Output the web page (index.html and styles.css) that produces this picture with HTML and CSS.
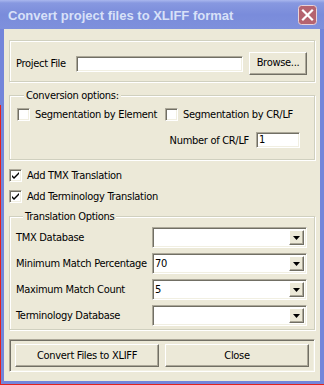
FILE: index.html
```html
<!DOCTYPE html>
<html lang="en">
<head>
    <meta charset="UTF-8">
    <title>Convert project files to XLIFF format</title>
    <link rel="stylesheet" href="styles.css">
</head>
<body>
    <div class="window">
        <div class="titlebar">
            <span class="title">Convert project files to XLIFF format</span>
            <span class="close-btn">
                <svg width="19" height="20" viewBox="0 0 19 20">
                    <rect x="0.5" y="0.5" width="18" height="19" rx="3" fill="#b5636f" stroke="#e9d2d8"/>
                    <path d="M5 5.5 L14 14.5 M14 5.5 L5 14.5" stroke="#fff" stroke-width="2.2" stroke-linecap="square"/>
                </svg>
            </span>
        </div>

        <div class="client">
            <div class="group project">
                <span class="lbl file-lbl">Project File</span>
                <span class="field file"></span>
                <button class="btn browse">Browse...</button>
            </div>

            <fieldset class="group conv">
                <legend>Conversion options:</legend>
                <div class="checks">
                    <label class="check first"><span class="box"></span>Segmentation by Element</label>
                    <label class="check"><span class="box"></span>Segmentation by CR/LF</label>
                </div>
                <div class="crlf">
                    <span>Number of CR/LF</span>
                    <span class="field num">1</span>
                </div>
            </fieldset>

            <label class="check top tmx"><span class="box checked"></span>Add TMX Translation</label>
            <label class="check top term"><span class="box checked"></span>Add Terminology Translation</label>

            <fieldset class="group trans">
                <legend>Translation Options</legend>
                <div class="opt">
                    <span>TMX Database</span>
                    <span class="combo"><span class="val"></span><span class="arrow"></span></span>
                </div>
                <div class="opt">
                    <span>Minimum Match Percentage</span>
                    <span class="combo"><span class="val">70</span><span class="arrow"></span></span>
                </div>
                <div class="opt">
                    <span>Maximum Match Count</span>
                    <span class="combo"><span class="val">5</span><span class="arrow"></span></span>
                </div>
                <div class="opt">
                    <span>Terminology Database</span>
                    <span class="combo"><span class="val"></span><span class="arrow"></span></span>
                </div>
            </fieldset>

            <div class="actions">
                <button class="btn wide">Convert Files to XLIFF</button>
                <button class="btn wide">Close</button>
            </div>
        </div>
    </div>
</body>
</html>
```

FILE: styles.css
```css
body {
    margin: 0;
    padding: 0;
    font-family: 'DejaVu Sans', sans-serif;
    font-stretch: condensed;
    font-size: 11px;
    letter-spacing: -0.3px;
    color: #000;
    background: #fff;
}

.window {
    width: 324px;
    height: 385px;
    box-sizing: border-box;
    display: flex;
    flex-direction: column;
    background:
        linear-gradient(#e3211c, #e3211c) left bottom / 100% 1px no-repeat,
        linear-gradient(to bottom, transparent 105px, #e3211c 105px) left top / 1px 100% no-repeat,
        #7385da;
}

.titlebar {
    height: 29px;
    flex: none;
    display: flex;
    align-items: center;
    justify-content: space-between;
    padding: 0 7px 0 8px;
    background: linear-gradient(#a9b7ee 0, #8798e0 3px, #7a8cdb 50%, #7e90dc 100%);
}

.title {
    font-family: 'Liberation Sans', sans-serif;
    font-stretch: normal;
    font-weight: bold;
    font-size: 13px;
    letter-spacing: 0;
    color: #d8e1f8;
    padding-top: 1px;
}

.close-btn {
    display: flex;
    margin-top: 1px;
}

.client {
    flex: 1;
    margin: 0 4px 4px 4px;
    background: #ece9d8;
    padding-top: 11px;
    display: flex;
    flex-direction: column;
}

.group {
    margin: 0 5px;
    border: 1px solid #d0d0bf;
    box-shadow: inset 1px 1px 0 #fff, 1px 1px 0 #fff;
    border-radius: 0;
    min-inline-size: 0;
}

legend {
    padding: 0 2px;
    margin-left: 7px;
    line-height: 13px;
    background: #ece9d8;
}

.project {
    height: 42px;
    box-sizing: border-box;
    display: flex;
    align-items: center;
    padding: 5px 0 0 6px;
}

.file-lbl {
    width: 60px;
}

.field {
    box-sizing: border-box;
    background: #fff;
    border-top: 1px solid #aca899;
    border-left: 1px solid #aca899;
    border-bottom: 1px solid #fff;
    border-right: 1px solid #fff;
    box-shadow: inset 1px 1px 0 #716f64, inset -1px -1px 0 #f1efe2;
}

.file {
    width: 167px;
    height: 16px;
}

.btn {
    font: inherit;
    letter-spacing: inherit;
    color: #000;
    background: #ece9d8;
    box-sizing: border-box;
    padding: 0;
    border-top: 1px solid #fff;
    border-left: 1px solid #fff;
    border-bottom: 1px solid #716f64;
    border-right: 1px solid #716f64;
    box-shadow: inset -1px -1px 0 #aca899;
}

.browse {
    width: 58px;
    height: 23px;
    margin-left: 6px;
    padding-bottom: 2px;
}

.conv {
    margin-top: 7px;
    padding: 0 7px 11px 7px;
}

.checks {
    display: flex;
    margin-top: 6px;
}

.check {
    display: flex;
    align-items: center;
    gap: 5px;
    height: 13px;
    white-space: nowrap;
}

.check.first {
    width: 148px;
}

.box {
    width: 13px;
    height: 13px;
    box-sizing: border-box;
    flex: none;
    background: #fff;
    border-top: 1px solid #aca899;
    border-left: 1px solid #aca899;
    border-bottom: 1px solid #fff;
    border-right: 1px solid #fff;
    box-shadow: inset 1px 1px 0 #716f64, inset -1px -1px 0 #f1efe2;
}

.box.checked {
    background:
        url("data:image/svg+xml;utf8,<svg xmlns='http://www.w3.org/2000/svg' width='11' height='11'><path d='M2 5 L4 7 L9 2 L9 4 L4 9 L2 7 Z' fill='%23000'/></svg>") center / 11px 11px no-repeat,
        #fff;
}

.crlf {
    display: flex;
    justify-content: flex-end;
    align-items: center;
    gap: 7px;
    margin: 11px 7px 0 0;
}

.num {
    width: 44px;
    height: 16px;
    padding-left: 2px;
    line-height: 13px;
}

.top {
    margin-left: 5px;
}

.tmx {
    margin-top: 9px;
}

.term {
    margin-top: 8px;
}

.trans {
    margin-top: 7px;
    padding: 0 7px 3px 6px;
}

.opt {
    display: flex;
    align-items: center;
    justify-content: space-between;
    margin-top: 5px;
}

.opt:first-of-type {
    margin-top: 4px;
}

.combo {
    width: 155px;
    height: 21px;
    box-sizing: border-box;
    display: flex;
    align-items: center;
    background: #fff;
    border-top: 1px solid #aca899;
    border-left: 1px solid #aca899;
    border-bottom: 1px solid #fff;
    border-right: 1px solid #fff;
    box-shadow: inset 1px 1px 0 #716f64, inset -1px -1px 0 #f1efe2;
    padding: 2px;
}

.val {
    flex: 1;
}

.arrow {
    width: 15px;
    height: 15px;
    box-sizing: border-box;
    flex: none;
    background:
        url("data:image/svg+xml;utf8,<svg xmlns='http://www.w3.org/2000/svg' width='7' height='4'><path d='M0 0 H7 L3.5 4 Z' fill='%23000'/></svg>") center / 7px 4px no-repeat,
        #ece9d8;
    border-top: 1px solid #fff;
    border-left: 1px solid #fff;
    border-bottom: 1px solid #716f64;
    border-right: 1px solid #716f64;
    box-shadow: inset -1px -1px 0 #aca899;
}

.actions {
    margin: 9px 5px 0;
    display: flex;
    gap: 6px;
    padding: 4px 5px;
    border-top: 1px solid #aca899;
    border-left: 1px solid #aca899;
    border-bottom: 1px solid #fff;
    border-right: 1px solid #fff;
    box-shadow: inset 1px 1px 0 #716f64, inset -1px -1px 0 #f1efe2;
}

.wide {
    flex: 1;
    height: 23px;
}
```
